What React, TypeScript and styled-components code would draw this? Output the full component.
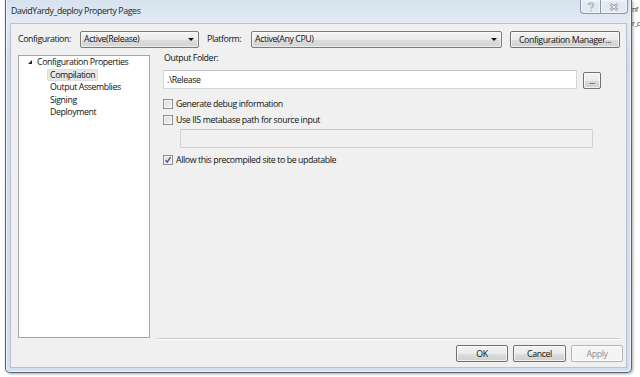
import styled, { createGlobalStyle } from "styled-components";

const GlobalStyle = createGlobalStyle`
  html, body {
    margin: 0;
    padding: 0;
    background: #ffffff;
  }
  body {
    font-family: "Open Sans", "Noto Sans", sans-serif;
    font-size: 8.8px;
    letter-spacing: -0.4px;
    color: #111111;
  }
`;

const Desktop = styled.div`
  position: relative;
  width: 640px;
  height: 377px;
  overflow: hidden;
  background: #ffffff;
`;

/* window of another app peeking out behind the dialog */
const BackWindow = styled.div`
  position: absolute;
  left: 631px;
  top: 3px;
  width: 9px;
  padding-left: 1px;
  box-sizing: border-box;
  font-size: 7px;
  line-height: 14px;
  letter-spacing: -0.6px;
  color: #333;
  white-space: nowrap;
`;

const Window = styled.div`
  position: relative;
  z-index: 1;
  box-sizing: border-box;
  margin-left: 5px;
  width: 627px;
  height: 373px;
  padding: 0 4px 4px;
  display: flex;
  flex-direction: column;
  border: 1px solid #5b636d;
  border-top: none;
  border-radius: 0 0 5px 5px;
  background: linear-gradient(180deg, #d6e2ef 0px, #e3ebf4 22px, #cfdceb 60px, #d4e0ee 100%);
  box-shadow: 1px 1px 3px rgba(0, 0, 0, 0.35), inset 1px 0 0 #eef4fb, inset -1px 0 0 #eef4fb, inset 0 -1px 0 #eef4fb;
`;

const TitleBar = styled.div`
  height: 23px;
  display: flex;
  align-items: flex-start;
`;

const Title = styled.div`
  padding: 5px 0 0 1px;
  line-height: 13px;
  color: #1e1e1e;
`;

const CaptionGroup = styled.div`
  margin-left: auto;
  margin-right: -1px;
  display: flex;
  height: 14px;
`;

const CaptionButton = styled.div<{ $w: number; $first?: boolean }>`
  box-sizing: border-box;
  width: ${(p) => p.$w}px;
  height: 14px;
  display: flex;
  align-items: center;
  justify-content: center;
  border: 1px solid rgba(70, 80, 95, 0.55);
  border-top: none;
  border-left: ${(p) => (p.$first ? "1px solid rgba(70, 80, 95, 0.55)" : "none")};
  border-radius: ${(p) => (p.$first ? "0 0 0 4px" : "0 0 4px 0")};
  background: linear-gradient(180deg, rgba(255, 255, 255, 0.35), rgba(255, 255, 255, 0.1));
  box-shadow: inset 0 0 0 1px rgba(255, 255, 255, 0.5);
`;

const Client = styled.div`
  flex: 1;
  box-sizing: border-box;
  display: flex;
  flex-direction: column;
  padding: 6px 6px 4px 7px;
  background: #f0f0f0;
  border: 1px solid #b4c2d2;
`;

const TopRow = styled.div`
  height: 18px;
  display: flex;
  align-items: center;
`;

const FieldLabel = styled.span<{ $w: number }>`
  width: ${(p) => p.$w}px;
  flex: none;
  white-space: nowrap;
`;

const Combo = styled.div<{ $w: number }>`
  box-sizing: border-box;
  width: ${(p) => p.$w}px;
  height: 17px;
  flex: none;
  display: flex;
  align-items: center;
  padding: 0 4px 0 3px;
  border: 1px solid #7a7a7a;
  border-radius: 2px;
  background: linear-gradient(180deg, #f4f4f4 0%, #ebebeb 50%, #dddddd 51%, #d3d3d3 100%);
  box-shadow: inset 0 0 0 1px rgba(255, 255, 255, 0.6);
  margin-right: 8px;
`;

const ComboText = styled.span`
  flex: 1;
  white-space: nowrap;
`;

const Arrow = styled.span`
  width: 0;
  height: 0;
  border-left: 3px solid transparent;
  border-right: 3px solid transparent;
  border-top: 3px solid #111;
`;

const Button = styled.button<{ $w: number; $h?: number; $disabled?: boolean }>`
  box-sizing: border-box;
  width: ${(p) => p.$w}px;
  height: ${(p) => p.$h ?? 17}px;
  flex: none;
  padding: 0;
  font: inherit;
  letter-spacing: inherit;
  color: ${(p) => (p.$disabled ? "#8d8d8d" : "#111111")};
  border: 1px solid ${(p) => (p.$disabled ? "#b2b5b8" : "#707070")};
  border-radius: 2px;
  background: ${(p) =>
    p.$disabled
      ? "#f4f4f4"
      : "linear-gradient(180deg, #f2f2f2 0%, #ebebeb 50%, #dddddd 51%, #cfcfcf 100%)"};
  box-shadow: inset 0 0 0 1px ${(p) => (p.$disabled ? "#fbfbfb" : "rgba(255, 255, 255, 0.7)")};
  white-space: nowrap;
`;

const Body = styled.div`
  margin-top: 7px;
  display: flex;
  align-items: flex-start;
`;

const Tree = styled.div`
  box-sizing: border-box;
  width: 132px;
  height: 283px;
  flex: none;
  padding-left: 9px;
  background: #ffffff;
  border: 1px solid #a6a6a6;
  line-height: 12.5px;
`;

const TreeRoot = styled.div`
  display: flex;
  align-items: center;
  white-space: nowrap;
`;

const Expander = styled.span`
  width: 0;
  height: 0;
  margin-right: 5px;
  border-left: 4px solid transparent;
  border-bottom: 4px solid #262626;
`;

const TreeItem = styled.div<{ $selected?: boolean }>`
  width: fit-content;
  margin-left: 19px;
  padding: 0 3px;
  border-radius: 2px;
  white-space: nowrap;
  background: ${(p) => (p.$selected ? "#e8e8e8" : "transparent")};
  box-shadow: ${(p) => (p.$selected ? "inset 0 0 0 1px #dcdcdc" : "none")};
`;

const Pages = styled.div`
  box-sizing: border-box;
  height: 284px;
  flex: 1;
  margin-left: 7px;
  padding-left: 6px;
  border-bottom: 1px solid #c9c9c9;
  box-shadow: 0 1px 0 #ffffff;
`;

const PageLabel = styled.div`
  margin-top: -3px;
  padding-left: 1px;
  line-height: 12px;
`;

const FolderRow = styled.div`
  margin-top: 6px;
  display: flex;
  align-items: flex-end;
  gap: 6px;
`;

const TextBox = styled.div<{ $w: number; $disabled?: boolean }>`
  box-sizing: border-box;
  width: ${(p) => p.$w}px;
  height: 19px;
  display: flex;
  align-items: center;
  padding-left: 3px;
  background: ${(p) => (p.$disabled ? "#f0f0f0" : "#ffffff")};
  border: 1px solid ${(p) => (p.$disabled ? "#d2d2d2" : "#d3d6da")};
  border-top-color: ${(p) => (p.$disabled ? "#c8c8c8" : "#c2c6cc")};
  border-radius: 1px;
`;

const IndentedBox = styled(TextBox)`
  margin: 1px 0 0 17px;
`;

const CheckRow = styled.label<{ $mt: number }>`
  margin-top: ${(p) => p.$mt}px;
  height: 16px;
  display: flex;
  align-items: center;
  gap: 3px;
  white-space: nowrap;
`;

const Box = styled.span`
  box-sizing: border-box;
  width: 10px;
  height: 10px;
  flex: none;
  display: flex;
  align-items: center;
  justify-content: center;
  border: 1px solid #8f8f8f;
  background: linear-gradient(135deg, #d9d9d9, #f6f6f6);
  box-shadow: inset 0 0 0 1px #f4f4f4;
`;

const Footer = styled.div`
  margin: 6px -3px 0 0;
  display: flex;
  justify-content: flex-end;
  gap: 5px;
`;

const Check = ({ checked, label, mt }: { checked?: boolean; label: string; mt: number }) => (
  <CheckRow $mt={mt}>
    <Box>
      {checked && (
        <svg width="8" height="8" viewBox="0 0 8 8">
          <path d="M1.5 4.2 L3.2 6.2 L6.6 1.2" fill="none" stroke="#3c5591" strokeWidth="1.4" />
        </svg>
      )}
    </Box>
    {label}
  </CheckRow>
);

const App = () => {
  return (
    <Desktop>
      <GlobalStyle />
      <BackWindow>
        nf
        <br />
        r_c
      </BackWindow>
      <Window>
        <TitleBar>
          <Title>DavidYardy_deploy Property Pages</Title>
          <CaptionGroup>
            <CaptionButton $w={21} $first>
              <svg width="8" height="10" viewBox="0 0 8 10">
                <path
                  d="M1.5 3 C1.5 0.8 6.5 0.8 6.5 3 C6.5 4.6 4 4.6 4 6.5 M4 8 L4 9.3"
                  fill="none"
                  stroke="#8a939e"
                  strokeWidth="1.6"
                />
                <path
                  d="M1.5 3 C1.5 0.8 6.5 0.8 6.5 3 C6.5 4.6 4 4.6 4 6.5 M4 8 L4 9.3"
                  fill="none"
                  stroke="#ffffff"
                  strokeWidth="0.6"
                />
              </svg>
            </CaptionButton>
            <CaptionButton $w={27}>
              <svg width="10" height="8" viewBox="0 0 10 8">
                <path d="M1.5 1 L8.5 7 M8.5 1 L1.5 7" stroke="#8a939e" strokeWidth="2.4" />
                <path d="M1.5 1 L8.5 7 M8.5 1 L1.5 7" stroke="#ffffff" strokeWidth="1" />
              </svg>
            </CaptionButton>
          </CaptionGroup>
        </TitleBar>
        <Client>
          <TopRow>
            <FieldLabel $w={62}>Configuration:</FieldLabel>
            <Combo $w={119}>
              <ComboText>Active(Release)</ComboText>
              <Arrow />
            </Combo>
            <FieldLabel $w={44}>Platform:</FieldLabel>
            <Combo $w={251}>
              <ComboText>Active(Any CPU)</ComboText>
              <Arrow />
            </Combo>
            <Button $w={110} style={{ marginLeft: "auto", alignSelf: "flex-end" }}>
              Configuration Manager...
            </Button>
          </TopRow>
          <Body>
            <Tree>
              <TreeRoot>
                <Expander />
                Configuration Properties
              </TreeRoot>
              <TreeItem $selected>Compilation</TreeItem>
              <TreeItem>Output Assemblies</TreeItem>
              <TreeItem>Signing</TreeItem>
              <TreeItem>Deployment</TreeItem>
            </Tree>
            <Pages>
              <PageLabel>Output Folder:</PageLabel>
              <FolderRow>
                <TextBox $w={414}>.\Release</TextBox>
                <Button $w={18}>...</Button>
              </FolderRow>
              <Check mt={7} label="Generate debug information" />
              <Check mt={0} label="Use IIS metabase path for source input" />
              <IndentedBox $w={413} $disabled />
              <Check mt={4} checked label="Allow this precompiled site to be updatable" />
            </Pages>
          </Body>
          <Footer>
            <Button $w={52}>OK</Button>
            <Button $w={53}>Cancel</Button>
            <Button $w={52} $disabled>
              Apply
            </Button>
          </Footer>
        </Client>
      </Window>
    </Desktop>
  );
};

export default App;
